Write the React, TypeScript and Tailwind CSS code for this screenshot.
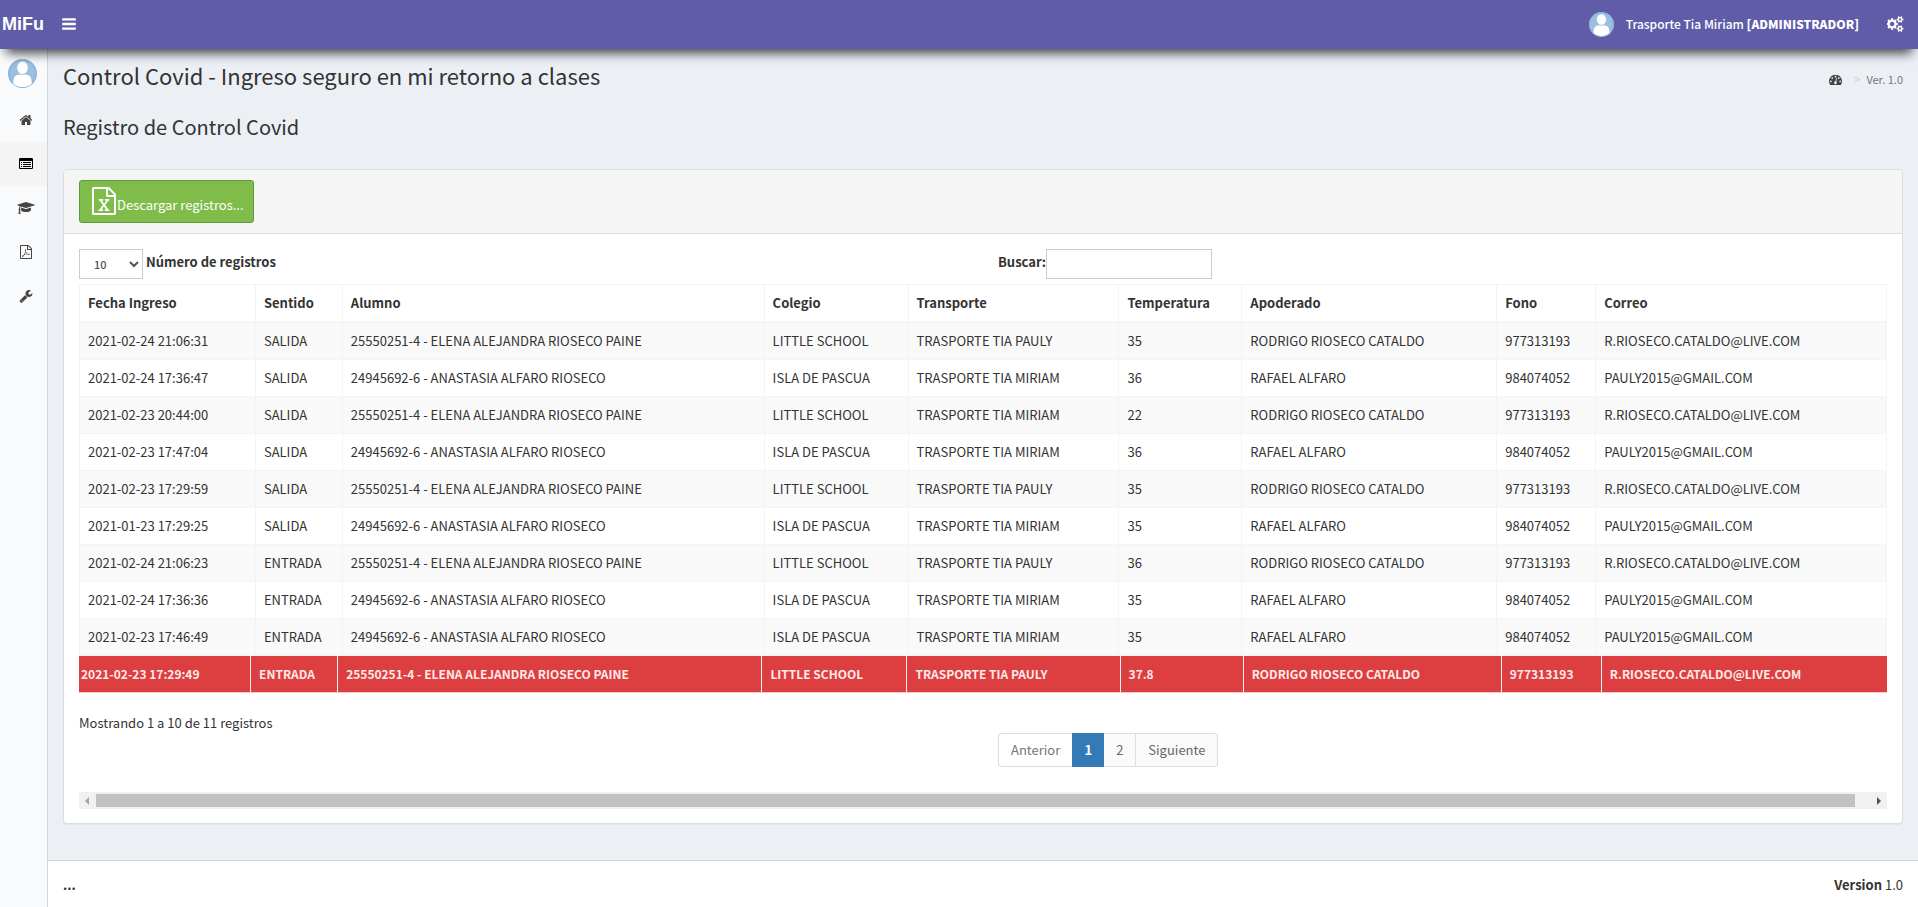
import { useState } from "react";

type IconProps = { d: string; box?: string; className?: string };

function Icon({ d, box = "0 0 1792 1792", className }: IconProps) {
  return (
    <svg viewBox={box} className={className} fill="currentColor" aria-hidden="true">
      <path d={d} />
    </svg>
  );
}

const FILE =
  "M1596 380q28 28 48 76t20 88v1152q0 40-28 68t-68 28h-1344q-40 0-68-28t-28-68v-1600q0-40 28-68t68-28h896q40 0 88 20t76 48zm-444-244v376h376q-10-29-22-41l-313-313q-12-12-41-22zm384 1528v-1024h-416q-40 0-68-28t-28-68v-416h-768v1536h1280z";
const DOT = "q0-53-37.500-90.500t-90.500-37.500-90.500 37.500-37.500 90.500 37.500 90.500 90.500 37.500 90.500-37.500 37.500-90.500z";
const BULLET = "v64q0 13-9.500 22.500t-22.500 9.500h-64q-13 0-22.500-9.500t-9.500-22.500v-64q0-13 9.500-22.500t22.500-9.500h64q13 0 22.500 9.500t9.500 22.500z";
const LINE = "v64q0 13-9.500 22.500t-22.500 9.500h-960q-13 0-22.500-9.500t-9.500-22.500v-64q0-13 9.500-22.500t22.500-9.500h960q13 0 22.500 9.500t9.500 22.500z";
const BAR = "v128q0 26-19 45t-45 19h-1408q-26 0-45-19t-19-45v-128q0-26 19-45t45-19h1408q26 0 45 19t19 45z";
const SMALL_COG =
  "v140q0 16-149 31-12 27-30 52 51 113 51 138 0 4-4 7-122 71-124 71-8 0-46-47t-52-68q-20 2-30 2t-30-2q-14 21-52 68t-46 47q-2 0-124-71-4-3-4-7 0-25 51-138-18-25-30-52-149-15-149-31v-140q0-16 149-31 13-29 30-52-51-113-51-138 0-4 4-7 4-2 35-20t59-34 30-16q8 0 46 46.500t52 67.500q20-2 30-2t30 2q51-71 92-112l6-2q4 0 124 70 4 3 4 7 0 25-51 138 17 23 30 52 149 15 149 31z";

const ICONS = {
  bars: `M1664 1344${BAR}M1664 832${BAR}M1664 320${BAR}`,
  home: "M1472 992v480q0 26-19 45t-45 19h-384v-384h-256v384h-384q-26 0-45-19t-19-45v-480q0-1 .5-3t.5-3l575-474 575 474q1 2 1 6zm223-69l-62 74q-8 9-21 11h-3q-13 0-21-7l-692-577-692 577q-12 8-24 7-13-2-21-11l-62-74q-8-10-7-23.500t11-21.500l719-599q32-26 76-26t76 26l244 204v-195q0-14 9-23t23-9h192q14 0 23 9t9 23v408l219 182q10 8 11 21.500t-7 23.500z",
  list: `M384 1184${BULLET}M384 928${BULLET}M384 672${BULLET}M1536 1184${LINE}M1536 928${LINE}M1536 672${LINE}M1664 1376v-832q0-13-9.500-22.500t-22.500-9.500h-1472q-13 0-22.500 9.500t-9.500 22.500v832q0 13 9.500 22.500t22.500 9.500h1472q13 0 22.500-9.500t9.500-22.500zm128-1088v1088q0 66-47 113t-113 47h-1472q-66 0-113-47t-47-113v-1088q0-66 47-113t113-47h1472q66 0 113 47t47 113z`,
  cap: "M1774 836l18 316q4 69-82 128t-235 93.500-323 34.500-323-34.500-235-93.500-82-128l18-316 574 181q22 7 48 7t48-7zm530-324q0 23-22 31l-1120 352q-4 1-10 1t-10-1l-652-206q-43 34-71 111.500t-34 178.500q63 36 63 109 0 69-58 107l58 433q2 14-8 25-9 11-24 11h-192q-15 0-24-11-10-11-8-25l58-433q-58-38-58-107 0-73 65-111 11-207 98-330l-333-104q-22-8-22-31t22-31l1120-352q4-1 10-1t10 1l1120 352q22 8 22 31z",
  pdf: `${FILE}m-514-593q33 26 84 56 59-7 117-7 147 0 177 49 16 22 2 52 0 1-1 2l-2 2v1q-6 38-71 38-48 0-115-20t-130-53q-221 24-392 83-153 262-242 262-15 0-28-7l-24-12q-1-1-6-5-10-10-6-36 9-40 56-91.500t132-96.500q14-9 23 6 2 2 2 4 52-85 107-197 68-136 104-262-24-82-30.500-159.500t6.500-127.500q11-40 42-40h22q23 0 35 15 18 21 9 68-2 6-4 8 1 3 1 8v30q-2 123-14 192 55 164 146 238zm-576 411q52-24 137-158-51 40-87.500 84t-49.500 74zm398-920q-15 42-2 132 1-7 7-44 0-3 7-43 1-4 4-8-1-1-1-2-1-2-1-3-1-22-13-36 0 1-1 2zm-124 661q135-54 284-81-2-1-13-9.500t-16-13.500q-76-67-127-176-27 86-83 197-30 56-45 83zm646-16q-24-24-140-24 76 28 124 28 14 0 18-1 0-1-2-3z`,
  excel: `${FILE}m-979-234v106h281v-106h-75l103-161q5-7 10-16.500t7.500-13.500 3.500-4h2q1 4 5 10 2 4 4.500 7.500t6 8 6.500 8.500l107 161h-76v106h291v-106h-68l-192-273 195-282h67v-107h-279v107h74l-103 159q-4 7-10 16.500t-9 13.500l-2 3h-2q-1-4-5-10-6-11-17-23l-106-159h76v-107h-290v107h68l189 272-194 283h-68z`,
  wrench: "M448 1472q0-26-19-45t-45-19-45 19-19 45 19 45 45 19 45-19 19-45zm644-420l-682 682q-37 37-90 37-52 0-91-37l-106-108q-38-36-38-90 0-53 38-91l681-681q39 98 114.500 173.500t173.500 114.500zm634-435q0 39-23 106-47 134-164.500 217.500t-258.500 83.500q-185 0-316.500-131.500t-131.500-316.500 131.500-316.500 316.500-131.500q58 0 121.500 16.500t107.500 46.500q16 11 16 28t-16 28l-293 169v224l193 107q5-3 79-48.500t135.500-81 70.500-35.500q15 0 23.500 10t8.500 25z",
  cogs: `M832 896q0-106-75-181t-181-75-181 75-75 181 75 181 181 75 181-75 75-181zM1600 1408q0-52-38-90t-90-38-90 38-38 90q0 53 37.500 90.500t90.500 37.500 90.500-37.500 37.500-90.500zM1600 384q0-52-38-90t-90-38-90 38-38 90q0 53 37.500 90.500t90.500 37.500 90.500-37.500 37.500-90.500zM1216 805v185q0 10-7 19.500t-16 10.500l-155 24q-11 35-32 76 34 48 90 115 7 11 7 20 0 12-7 19-23 30-82.500 89.500t-78.500 59.500q-11 0-21-7l-115-90q-37 19-77 31-11 108-23 155-7 24-30 24h-186q-11 0-20-7.500t-10-17.500l-23-153q-34-10-75-31l-118 89q-7 7-20 7-11 0-21-8-144-133-144-160 0-9 7-19 10-14 41-53t47-61q-23-44-35-82l-152-24q-10-1-17-9.500t-7-19.500v-185q0-10 7-19.500t16-10.500l155-24q11-35 32-76-34-48-90-115-7-11-7-20 0-12 7-20 22-30 82-89t79-59q11 0 21 7l115 90q34-18 77-32 11-108 23-154 7-24 30-24h186q11 0 20 7.500t10 17.500l23 153q34 10 75 31l118-89q8-7 20-7 11 0 21 8 144 133 144 160 0 8-7 19-12 16-42 54t-45 60q23 48 34 82l152 23q10 2 17 10.500t7 19.500zM1856 1338${SMALL_COG}M1856 314${SMALL_COG}`,
  gauge: `M384 1152${DOT}M576 704${DOT}M1004 1185l101-382q6-26-7.500-48.500t-38.500-29.500-48 6.500-30 39.500l-101 382q-60 5-107 43.500t-63 98.500q-20 77 20 146t117 89 146-20 89-117q16-60-6-117t-72-91zM1664 1152${DOT}M1024 512${DOT}M1472 704${DOT}M1792 1152q0 261-141 483-19 29-54 29h-1402q-35 0-54-29-141-221-141-483 0-182 71-348t191-286 286-191 348-71 348 71 286 191 191 286 71 348z`,
};

function Avatar({ className }: { className: string }) {
  return (
    <svg viewBox="0 0 60 60" className={className} aria-hidden="true">
      <circle cx="30" cy="30" r="30" fill="#9bbfe0" />
      <circle cx="30" cy="30" r="28" fill="none" stroke="#8db4da" strokeWidth="3" />
      <path d="M11 51V46Q11 33 24 32H36Q49 33 49 46V51Q41 58 30 58T11 51Z" fill="#fff" />
      <ellipse cx="30" cy="18" rx="12" ry="14" fill="#fff" stroke="#9bbfe0" strokeWidth="2" />
    </svg>
  );
}

const HEADERS = ["Fecha Ingreso", "Sentido", "Alumno", "Colegio", "Transporte", "Temperatura", "Apoderado", "Fono", "Correo"];

const ELENA = "25550251-4 - ELENA ALEJANDRA RIOSECO PAINE";
const ANASTASIA = "24945692-6 - ANASTASIA ALFARO RIOSECO";
const RODRIGO = ["RODRIGO RIOSECO CATALDO", "977313193", "R.RIOSECO.CATALDO@LIVE.COM"];
const RAFAEL = ["RAFAEL ALFARO", "984074052", "PAULY2015@GMAIL.COM"];
const PAULY = "TRASPORTE TIA PAULY";
const MIRIAM = "TRASPORTE TIA MIRIAM";

const ROWS: string[][] = [
  ["2021-02-24 21:06:31", "SALIDA", ELENA, "LITTLE SCHOOL", PAULY, "35", ...RODRIGO],
  ["2021-02-24 17:36:47", "SALIDA", ANASTASIA, "ISLA DE PASCUA", MIRIAM, "36", ...RAFAEL],
  ["2021-02-23 20:44:00", "SALIDA", ELENA, "LITTLE SCHOOL", MIRIAM, "22", ...RODRIGO],
  ["2021-02-23 17:47:04", "SALIDA", ANASTASIA, "ISLA DE PASCUA", MIRIAM, "36", ...RAFAEL],
  ["2021-02-23 17:29:59", "SALIDA", ELENA, "LITTLE SCHOOL", PAULY, "35", ...RODRIGO],
  ["2021-01-23 17:29:25", "SALIDA", ANASTASIA, "ISLA DE PASCUA", MIRIAM, "35", ...RAFAEL],
  ["2021-02-24 21:06:23", "ENTRADA", ELENA, "LITTLE SCHOOL", PAULY, "36", ...RODRIGO],
  ["2021-02-24 17:36:36", "ENTRADA", ANASTASIA, "ISLA DE PASCUA", MIRIAM, "35", ...RAFAEL],
  ["2021-02-23 17:46:49", "ENTRADA", ANASTASIA, "ISLA DE PASCUA", MIRIAM, "35", ...RAFAEL],
];
const ALERT_ROW = ["2021-02-23 17:29:49", "ENTRADA", ELENA, "LITTLE SCHOOL", PAULY, "37.8", ...RODRIGO];

const GRID = "grid grid-cols-[176fr_87fr_422fr_144fr_211fr_123fr_255fr_99fr_290fr]";
const ALERT_GRID = "grid grid-cols-[172fr_87fr_424fr_145fr_213fr_123fr_258fr_100fr_285fr]";

const NAV = [
  { label: "Inicio", d: ICONS.home, active: false },
  { label: "Registros", d: ICONS.list, active: true },
  { label: "Alumnos", d: ICONS.cap, active: false, wide: true },
  { label: "Reportes", d: ICONS.pdf, active: false },
  { label: "Herramientas", d: ICONS.wrench, active: false },
];

export default function App() {
  const [size, setSize] = useState("10");
  const [query, setQuery] = useState("");

  return (
    <div className="flex min-h-screen flex-col bg-[#ecf0f5] font-['Noto_Sans_CJK_JP','Noto_Sans_CJK_SC',sans-serif] text-[13px] leading-5 text-[#333]">
      <header className="relative z-10 flex h-[49px] items-center bg-[#605ca8] pr-[14px] pb-px text-white shadow-[0_10px_12px_-6px_rgba(0,0,0,0.75)]">
        <a href="#" className="w-12 pl-[2px] font-['Liberation_Sans',sans-serif] text-lg font-bold">
          MiFu
        </a>
        <button type="button" aria-label="Menú" className="ml-[13px]">
          <Icon d={ICONS.bars} className="h-4 w-4" />
        </button>
        <a href="#" className="ml-auto flex items-center">
          <Avatar className="mr-3 h-[25px] w-[25px]" />
          <span className="text-[12px] font-medium">
            Trasporte Tia Miriam <b className="font-black">[ADMINISTRADOR]</b>
          </span>
        </a>
        <button type="button" aria-label="Configuración" className="ml-7">
          <Icon d={ICONS.cogs} box="0 0 1920 1792" className="h-4 w-[17px]" />
        </button>
      </header>

      <div className="flex flex-1">
        <aside className="w-12 shrink-0 border-r border-[#d2d6de] bg-[#f9fafc]">
          <Avatar className="mt-[10px] ml-2 h-[29px] w-[29px]" />
          <nav className="mt-[10px] flex flex-col">
            {NAV.map((item) => (
              <a
                key={item.label}
                href="#"
                aria-label={item.label}
                className={
                  item.active
                    ? "flex h-11 items-center justify-center bg-[#f4f4f5] pl-[5px] text-black"
                    : "flex h-11 items-center justify-center pl-[5px] text-[#444]"
                }
              >
                <Icon
                  d={item.d}
                  box={item.wide ? "0 0 2304 1792" : undefined}
                  className={item.wide ? "h-[14px] w-[18px]" : "h-[14px] w-[14px]"}
                />
              </a>
            ))}
          </nav>
        </aside>

        <div className="flex min-w-0 flex-1 flex-col">
          <main className="flex-1 px-[15px] pb-[35px]">
            <div className="flex items-start justify-between pt-3">
              <h1 className="text-[22px] leading-7">Control Covid - Ingreso seguro en mi retorno a clases</h1>
              <ol className="mt-2 flex items-center text-[11px] text-[#777]">
                <li>
                  <a href="#" aria-label="Panel" className="text-[#444]">
                    <Icon d={ICONS.gauge} className="h-[13px] w-[13px]" />
                  </a>
                </li>
                <li className="pr-[6px] pl-3 text-[#ccc]" aria-hidden="true">
                  &gt;
                </li>
                <li>Ver. 1.0</li>
              </ol>
            </div>
            <h2 className="mt-6 text-[20px] leading-7">Registro de Control Covid</h2>

            <section className="mt-7 rounded border border-[#ddd] bg-white shadow-[0_1px_1px_rgba(0,0,0,0.05)]">
              <div className="rounded-t border-b border-[#ddd] bg-[#f5f5f5] px-[15px] py-[10px]">
                <button
                  type="button"
                  className="flex h-[43px] items-end gap-px rounded-[3px] border border-[#5d9a3e] bg-[#7fbc4a] pr-[9px] pb-[7px] pl-3 text-white"
                >
                  <Icon d={ICONS.excel} box="128 0 1536 1792" className="h-7 w-6" />
                  Descargar registros...
                </button>
              </div>

              <div className="p-[15px] pb-[14px]">
                <div className="grid grid-cols-2">
                  <div className="flex items-start gap-[3px]">
                    <select
                      id="page-size"
                      value={size}
                      onChange={(e) => setSize(e.target.value)}
                      className="h-[30px] w-16 border border-[#ccc] bg-white px-[10px] text-[11px] font-medium text-[#555]"
                    >
                      <option>10</option>
                      <option>25</option>
                      <option>50</option>
                      <option>100</option>
                    </select>
                    <label htmlFor="page-size" className="leading-[26px] font-bold">
                      Número de registros
                    </label>
                  </div>
                  <div className="flex items-start pl-[15px]">
                    <label htmlFor="search" className="leading-[26px] font-bold">
                      Buscar:
                    </label>
                    <input
                      id="search"
                      type="search"
                      value={query}
                      onChange={(e) => setQuery(e.target.value)}
                      className="h-[30px] w-[166px] border border-[#ccc] bg-white px-[10px]"
                    />
                  </div>
                </div>

                <table className="mt-[5px] block">
                  <thead className="block border border-b-2 border-[#f4f4f4]">
                    <tr className={GRID}>
                      {HEADERS.map((h) => (
                        <th key={h} className="border-r border-[#f4f4f4] p-2 text-left font-bold whitespace-nowrap last:border-r-0">
                          {h}
                        </th>
                      ))}
                    </tr>
                  </thead>
                  <tbody className="block">
                    {ROWS.map((row) => (
                      <tr key={row[0]} className={`${GRID} border border-t-0 border-[#f4f4f4] odd:bg-[#f9f9f9]`}>
                        {row.map((cell, i) => (
                          <td key={i} className="border-r border-[#f4f4f4] p-2 whitespace-nowrap last:border-r-0">
                            {cell}
                          </td>
                        ))}
                      </tr>
                    ))}
                    <tr className={`${ALERT_GRID} border-b border-[#f4c9c9] bg-[#dd3e40] text-[12px] font-bold text-[#fdeaea]`}>
                      {ALERT_ROW.map((cell, i) => (
                        <td key={i} className="border-r border-[#f4f4f4] p-2 whitespace-nowrap first:pl-[2px] last:border-r-0">
                          {cell}
                        </td>
                      ))}
                    </tr>
                  </tbody>
                </table>

                <div className="grid grid-cols-2 pt-5">
                  <p>Mostrando 1 a 10 de 11 registros</p>
                  <nav aria-label="Paginación" className="mt-5 flex pl-[15px] text-[#666]">
                    <button type="button" disabled className="h-[34px] rounded-l border border-r-0 border-[#ddd] bg-white px-3 text-[#777]">
                      Anterior
                    </button>
                    <button type="button" className="h-[34px] w-8 border border-[#337ab7] bg-[#337ab7] font-bold text-white">
                      1
                    </button>
                    <button type="button" className="h-[34px] w-8 border border-l-0 border-[#ddd] bg-[#fafafa]">
                      2
                    </button>
                    <button type="button" className="h-[34px] rounded-r border border-l-0 border-[#ddd] bg-[#fafafa] px-3">
                      Siguiente
                    </button>
                  </nav>
                </div>

                <div className="mt-[25px] flex h-[17px] items-center bg-[#f1f1f1]">
                  <svg viewBox="0 0 17 17" className="h-[17px] w-[17px] shrink-0" aria-hidden="true">
                    <path d="M10 5v8L6 9z" fill="#a3a3a3" />
                  </svg>
                  <div className="h-[13px] flex-1 bg-[#c1c1c1]" />
                  <svg viewBox="0 0 17 17" className="ml-[15px] h-[17px] w-[17px] shrink-0" aria-hidden="true">
                    <path d="M7 5v8l4-4z" fill="#505050" />
                  </svg>
                </div>
              </div>
            </section>
          </main>

          <footer className="flex justify-between border-t border-[#d2d6de] bg-white px-[15px] pt-[14px] pb-3">
            <b>...</b>
            <span>
              <b>Version</b> 1.0
            </span>
          </footer>
        </div>
      </div>
    </div>
  );
}
